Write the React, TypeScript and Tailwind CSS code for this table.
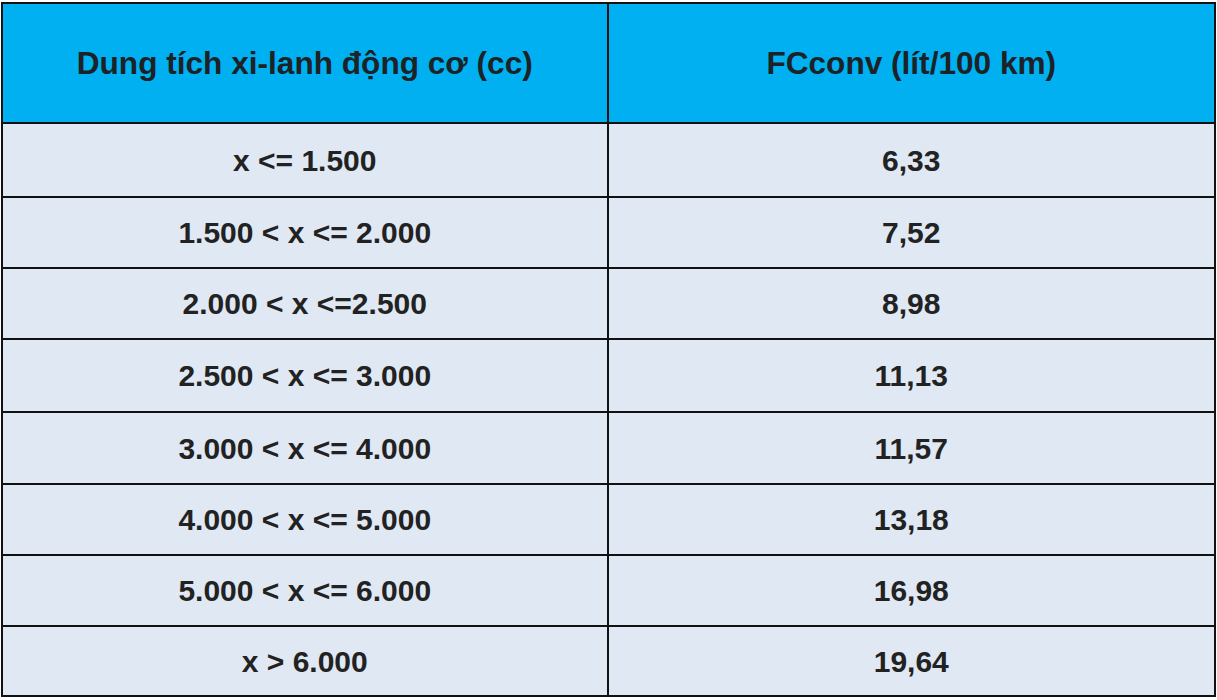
const rows: [string, string, string][] = [
  ['x <= 1.500', '6,33', 'h-[74px]'],
  ['1.500 < x <= 2.000', '7,52', 'h-[71px]'],
  ['2.000 < x <=2.500', '8,98', 'h-[71px]'],
  ['2.500 < x <= 3.000', '11,13', 'h-[73px]'],
  ['3.000 < x <= 4.000', '11,57', 'h-[72px]'],
  ['4.000 < x <= 5.000', '13,18', 'h-[71px]'],
  ['5.000 < x <= 6.000', '16,98', 'h-[71px]'],
  ['x > 6.000', '19,64', 'h-[68px]'],
];

export default function App() {
  return (
    <div className="w-[1217px] h-[700px] bg-white pt-[2px] pl-[1px] font-[family-name:'Liberation_Sans',Arial,sans-serif]">
      <div className="w-[1215px] border-2 border-[#111]">
        {/* header */}
        <div className="flex h-[120px] bg-[#00b0f0] border-b-2 border-[#111]">
          <div className="w-1/2 flex items-center justify-center border-r-2 border-[#111] pt-[2px] text-[31.6px] font-bold text-[#1c2226]">
            Dung tích xi-lanh động cơ (cc)
          </div>
          <div className="w-1/2 flex items-center justify-center pt-[2px] text-[31.6px] font-bold text-[#1c2226]">
            FCconv (lít/100 km)
          </div>
        </div>

        {rows.map(([range, value, h], i) => (
          <div
            key={i}
            className={`flex bg-[#dfe8f3] ${h} ${i < rows.length - 1 ? 'border-b-2 border-[#111]' : ''}`}
          >
            <div className="w-1/2 flex items-center justify-center border-r-2 border-[#111] text-[30px] font-bold text-[#222]">
              {range}
            </div>
            <div className="w-1/2 flex items-center justify-center text-[30px] font-bold text-[#222]">
              {value}
            </div>
          </div>
        ))}
      </div>
    </div>
  );
}
